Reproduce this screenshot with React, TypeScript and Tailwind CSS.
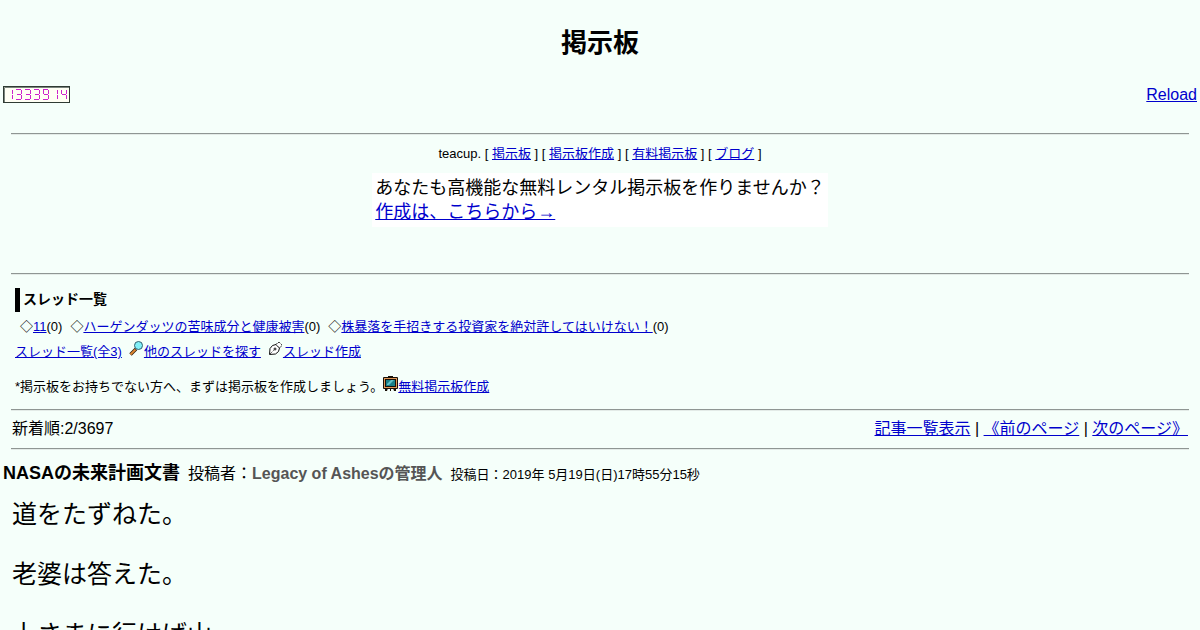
import React from "react";

interface LinkProps {
    children: React.ReactNode;
}

function Link({ children }: LinkProps) {
    return (
        <a href="#" className="text-[#0000cc] underline">
            {children}
        </a>
    );
}

function Rule() {
    return <hr className="mx-[11px] h-[2px] border-t border-b border-t-[#8f9693] border-b-[#e3ebe7]" />;
}

// Segment order: top, top left, top right, middle, bottom left, bottom right, bottom
const SEGMENTS: Record<string, string> = {
    "1": "0010010",
    "3": "1011011",
    "4": "0111010",
    "9": "1111011",
};

const SEGMENT_LINES = [
    "M0 .5H5",
    "M.5 1V5",
    "M5.5 1V5",
    "M1 5.5H5",
    "M.5 6V10",
    "M5.5 6V10",
    "M0 10.5H5",
];

function Counter({ value }: { value: string }) {
    return (
        <svg width="67" height="17" viewBox="0 0 67 17" role="img" aria-label={value}>
            <rect width="67" height="17" fill="#9aa89f" />
            <rect x=".5" y=".5" width="66" height="16" fill="#fffff4" stroke="#2f3b33" />
            <path d="M1.5 16V1.5H66" fill="none" stroke="#7a847d" />
            {value.split("").map((digit, i) => (
                <g key={i} transform={`translate(${4 + i * 9} 3)`} stroke="#cc22cc">
                    {SEGMENT_LINES.map((d, s) => SEGMENTS[digit][s] === "1" && <path key={s} d={d} />)}
                </g>
            ))}
        </svg>
    );
}

function SearchIcon() {
    return (
        <svg width="15" height="15" viewBox="0 0 15 15" className="inline-block align-baseline" aria-hidden="true">
            <path d="M1.5 13.5L7 8" stroke="#302010" strokeWidth="3.4" />
            <path d="M1.5 13.5L6.5 8.5" stroke="#e08830" strokeWidth="1.8" />
            <circle cx="9.5" cy="4.5" r="4" fill="#80f0f8" stroke="#306070" />
        </svg>
    );
}

function PenIcon() {
    return (
        <svg width="15" height="15" viewBox="0 0 15 15" className="inline-block align-baseline" fill="#fff" stroke="#111" aria-hidden="true">
            <path d="M1.5 13.5L2 7.5L4.5 4.5L8 3.5L11.5 7L10.5 10.5L7.5 13L1.5 13.5Z" />
            <path d="M8 3.5L10 1.5H11.5L13.5 3.5V5L11.5 7Z" strokeDasharray="2 1" />
            <path d="M2 13L6 9" strokeDasharray="1 1" />
            <circle cx="7" cy="8" r="1" />
        </svg>
    );
}

function BoardIcon() {
    return (
        <svg width="15" height="15" viewBox="0 0 15 15" className="inline-block align-baseline" aria-hidden="true">
            <path d="M5 0h5v2H5zM2 12h3l-1 3H2zM7 12h1v3H7zM10 12h3v3h-2z" fill="#181008" />
            <rect y="1" width="15" height="12" rx="1" fill="#181008" />
            <rect x="1.5" y="2.5" width="12" height="9" fill="none" stroke="#e09858" />
            <rect x="3" y="4" width="9" height="6" fill="#188088" />
            <path d="M4 8L8 4H11L6 9H4Z" fill="#60c0c8" />
        </svg>
    );
}

const services = ["掲示板", "掲示板作成", "有料掲示板", "ブログ"];

const threads = ["11", "ハーゲンダッツの苦味成分と健康被害", "株暴落を手招きする投資家を絶対許してはいけない！"];

const message = ["道をたずねた。", "", "老婆は答えた。", "", "上さまに行けば山"];

function App() {
    return (
        <div className="min-h-screen bg-[#f5fffa] font-['Liberation_Sans','Noto_Sans_CJK_JP',sans-serif] text-base leading-6 text-black">
            <h1 className="pt-6 text-center text-[26px] leading-[38px] font-bold">掲示板</h1>

            <div className="mt-6 flex h-[20px] items-start justify-between px-[3px]">
                <Counter value="1333914" />
                <div className="leading-[18px]">
                    <Link>Reload</Link>
                </div>
            </div>

            <div className="mt-[27px]">
                <Rule />
            </div>

            <nav className="mt-[7px] text-center text-[13px] leading-6">
                teacup.{" "}
                {services.map((name) => (
                    <React.Fragment key={name}>
                        [ <Link>{name}</Link> ]{" "}
                    </React.Fragment>
                ))}
            </nav>

            <div className="mx-auto mt-[7px] w-fit bg-white p-[3px] text-lg leading-6">
                <p>あなたも高機能な無料レンタル掲示板を作りませんか？</p>
                <Link>作成は、こちらから→</Link>
            </div>

            <div className="mt-[46px]">
                <Rule />
            </div>

            <section className="mt-[13px] px-[15px] text-[13px] leading-6">
                <h2 className="h-6 border-l-[5px] border-black pl-[3px] text-sm leading-[22px] font-bold">スレッド一覧</h2>
                <ul className="mt-[3px] flex gap-2 pl-[5px]">
                    {threads.map((title) => (
                        <li key={title}>
                            ◇<Link>{title}</Link>(0)
                        </li>
                    ))}
                </ul>
                <div className="mt-px flex gap-[7px]">
                    <Link>スレッド一覧(全3)</Link>
                    <span>
                        <SearchIcon />
                        <Link>他のスレッドを探す</Link>
                    </span>
                    <span>
                        <PenIcon />
                        <Link>スレッド作成</Link>
                    </span>
                </div>
                <p className="mt-[11px]">
                    *掲示板をお持ちでない方へ、まずは掲示板を作成しましょう。
                    <BoardIcon />
                    <Link>無料掲示板作成</Link>
                </p>
            </section>

            <div className="mt-[10px]">
                <Rule />
            </div>
            <div className="mt-[5px] mb-[6px] flex justify-between px-3 leading-[26px]">
                <span>新着順:2/3697</span>
                <span>
                    <Link>記事一覧表示</Link> | <Link>《前のページ</Link> | <Link>次のページ》</Link>
                </span>
            </div>
            <Rule />

            <article>
                <header className="mt-[11px] flex items-baseline gap-2 px-[3px]">
                    <h3 className="text-lg leading-6 font-bold">NASAの未来計画文書</h3>
                    <span>
                        投稿者：<b className="text-[#555]">Legacy of Ashesの管理人</b>
                    </span>
                    <span className="text-[13px]">投稿日：2019年 5月19日(日)17時55分15秒</span>
                </header>
                <div className="mt-3 px-3 text-[25px] leading-[30px]">
                    {message.map((line, i) => (
                        <p key={i} className="min-h-[30px]">
                            {line}
                        </p>
                    ))}
                </div>
            </article>
        </div>
    );
}

export default App;
